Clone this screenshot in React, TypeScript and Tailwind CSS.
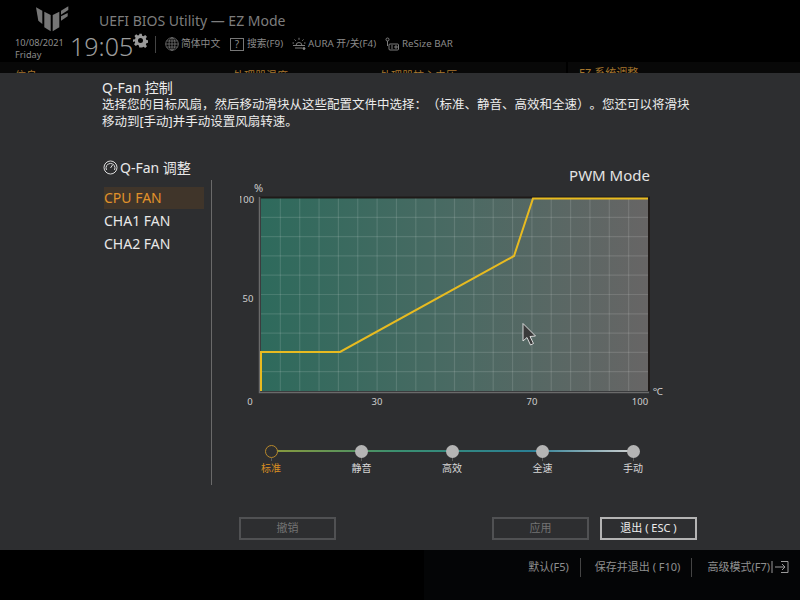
const FONT = "font-['Noto_Sans','Noto_Sans_CJK_SC',sans-serif] [text-spacing-trim:space-all]";

const xLines = Array.from({ length: 19 }, (_, i) => 261 + (i + 1) * 19.35);
const yLines = Array.from({ length: 9 }, (_, i) => 198 + (i + 1) * 19.3);

const fans = ["CPU FAN", "CHA1 FAN", "CHA2 FAN"];
const profiles = ["标准", "静音", "高效", "全速", "手动"];

const Logo = () => (
  <svg width="34" height="28" viewBox="0 0 34 28" fill="#767676">
    <path d="M1 2.300 L7.300 5.700 L7.300 19 L3.300 15.700 Z" />
    <path d="M9.300 6.700 L15.700 10 L15.700 26.300 L9.300 22.300 Z" />
    <path d="M17.700 10 L24.300 6.700 L24.300 22.300 L17.700 26.300 Z" />
    <path d="M26 5.700 L33.300 1.300 L33.300 5 L26 9.700 Z" />
    <path d="M26 11.300 L32.700 8 L32.700 11.300 L26 15.700 Z" />
  </svg>
);

const Gear = () => (
  <svg width="15" height="15" viewBox="0 0 24 24" fill="#9a9a9a">
    <path
      fillRule="evenodd"
      d="M10 1h4l.6 3.2 2.2.9L19.500 3.300l2.800 2.800-1.800 2.700.9 2.200 3.200.6v4l-3.200.6-.9 2.200 1.800 2.700-2.800 2.800-2.700-1.800-2.200.9L14 23h-4l-.6-3.200-2.200-.9-2.700 1.800-2.800-2.800 1.800-2.700-.9-2.200L0 14.400v-4l3.200-.6.9-2.200-1.800-2.700 2.800-2.800 2.700 1.800 2.200-.9zM12 8a4 4 0 1 0 0 8 4 4 0 0 0 0-8z"
    />
  </svg>
);

const Globe = () => (
  <svg width="14" height="14" viewBox="0 0 14 14" fill="none" stroke="#777" strokeWidth="0.8">
    <circle cx="7" cy="7" r="6.300" />
    <ellipse cx="7" cy="7" rx="3" ry="6.300" />
    <path d="M7 .7v12.600M.7 7h12.600M1.500 4h11M1.500 10h11" />
  </svg>
);

const Aura = () => (
  <svg width="14" height="14" viewBox="0 0 14 14" fill="none" stroke="#8a8a8a" strokeWidth="0.9">
    <path d="M4 8.500a3 3 0 1 1 6 0M1 8.500h12M7 .8v2M2.500 2.500l1.300 1.300M11.500 2.500l-1.300 1.300M.5 6h1.500M12 6h1.500M3 11h7.500" />
    <circle cx="12" cy="11.500" r="1" fill="#8a8a8a" />
  </svg>
);

const ResizeIcon = () => (
  <svg width="14" height="14" viewBox="0 0 14 14" fill="none" stroke="#8a8a8a" strokeWidth="0.9">
    <circle cx="2.500" cy="2.500" r="1.500" />
    <path d="M2.500 4v5" />
    <rect x="4" y="7" width="9.500" height="6" rx="1" />
    <path d="M6 9h2M6 11h2M10 9h2v2h-2z" />
  </svg>
);

const Stat = ({ label, className }: { label: string; className: string }) => (
  <div className={`text-[11px] leading-none text-[#a5752d] ${className}`}>{label}</div>
);

const Chart = () => (
  <svg width="430" height="250" viewBox="240 160 430 250" className="block">
    <defs>
      <linearGradient id="heat" x1="0" x2="1" y1="0" y2="0">
        <stop offset="0" stopColor="#2e6a5c" />
        <stop offset="0.5" stopColor="#4a6a63" />
        <stop offset="1" stopColor="#676565" />
      </linearGradient>
    </defs>
    <text x="650" y="181" textAnchor="end" fontSize="15" fill="#e4e4e4">PWM Mode</text>
    <text x="254" y="192" fontSize="11" fill="#c8c8c8">%</text>
    <rect x="261" y="198" width="387" height="193" fill="url(#heat)" />
    {xLines.map((x) => (
      <line key={x} x1={x} x2={x} y1="198" y2="391" stroke="#ffffff" strokeOpacity="0.12" strokeWidth="1.200" />
    ))}
    {yLines.map((y) => (
      <line key={y} x1="261" x2="648" y1={y} y2={y} stroke="#ffffff" strokeOpacity="0.12" strokeWidth="1.200" />
    ))}
    <path d="M260 197.500H649V391" fill="none" stroke="#1f1a18" strokeWidth="2" />
    <path d="M259.500 197V392.500H649" fill="none" stroke="#6a6a6a" strokeWidth="1.500" />
    <path d="M261 391V352H340L514 256L533 198.500H648" fill="none" stroke="#e8bb20" strokeWidth="2" />
    <g fontSize="9.500" fill="#cfcfcf" textAnchor="middle">
      <text x="246" y="203">100</text>
      <text x="248" y="302">50</text>
      <text x="250" y="405">0</text>
      <text x="377" y="405">30</text>
      <text x="532" y="405">70</text>
      <text x="640" y="405">100</text>
    </g>
    <text x="653" y="395" fontSize="10" fill="#cfcfcf">℃</text>
    <path
      d="M523 323.500V341L527 337.500L530.500 345L533.500 343.500L530 336.500L535.500 336Z"
      fill="#3a3a3a"
      stroke="#e8e8e8"
      strokeWidth="0.9"
    />
  </svg>
);

const ProfileSlider = () => (
  <div className="relative mt-[35px] ml-[11px] w-[402px] flex justify-between">
    <div className="absolute left-[20px] right-[20px] top-[5px] h-[2px] bg-[linear-gradient(90deg,#8a9a3c,#3a8f70_35%,#2a7f95_72%,#d0d0d0)]" />
    {profiles.map((p, i) => (
      <div key={p} className="relative w-[40px] flex flex-col items-center">
        {i === 0 ? (
          <div className="w-[13px] h-[13px] -mt-[0.5px] rounded-full border-[1.5px] border-[#b8892c] bg-[#2d2e30]" />
        ) : (
          <div className="w-[13px] h-[13px] -mt-[0.5px] rounded-full bg-[#b4b4b4]" />
        )}
        <div className="w-px h-[3px] bg-[#5a5a5a]" />
        <span className={`text-[10px] leading-[14px] ${i === 0 ? "text-[#d88d22]" : "text-[#d8d8d8]"}`}>{p}</span>
      </div>
    ))}
  </div>
);

export default function App() {
  return (
    <div className={`w-[800px] h-[600px] flex flex-col overflow-hidden bg-black ${FONT}`}>
      {/* top bar */}
      <header className="h-[62px] flex flex-col">
        <div className="h-[32px] flex items-center">
          <div className="ml-[35px] mt-[6px]"><Logo /></div>
          <h1 className="ml-[30px] mt-[10px] text-[14px] leading-none text-[#7d7d7d]">UEFI BIOS Utility — EZ Mode</h1>
        </div>
        <div className="h-[30px] flex items-start text-[#8a8a8a] text-[9.800px]">
          <div className="ml-[15px] w-[55px] pt-[5px] text-[9.200px] leading-[12px] text-[#8c8c8c]">
            <div>10/08/2021</div>
            <div>Friday</div>
          </div>
          <div className="pt-[1.5px] text-[25px] leading-none font-light text-[#9c9c9c] w-[63px]">19:05</div>
          <div className="mt-[1px]"><Gear /></div>
          <div className="ml-[7px] mt-[4px] w-px h-[17px] bg-[#444]" />
          <div className="ml-[9px] h-[24px] flex items-center">
            <Globe />
            <span className="ml-[2px] w-[49px]">简体中文</span>
            <div className="w-[14px] h-[13px] border border-[#777] text-[10px] leading-[11px] text-center">?</div>
            <span className="ml-[3px] w-[45px]">搜索(F9)</span>
            <Aura />
            <span className="ml-[2px] w-[77px]">AURA 开/关(F4)</span>
            <ResizeIcon />
            <span className="ml-[3px]">ReSize BAR</span>
          </div>
        </div>
      </header>

      {/* tiles behind the dialog */}
      <div className="h-[11px] flex overflow-hidden bg-[#080808]">
        <Stat label="信息" className="pt-[8px] ml-[15px] w-[218px]" />
        <Stat label="处理器温度" className="pt-[8px] w-[147px]" />
        <Stat label="处理器核心电压" className="pt-[8px] w-[186px]" />
        <div className="w-[2px] bg-black" />
        <Stat label="EZ 系统调整" className="pt-[5px] ml-[11px]" />
      </div>

      {/* dialog */}
      <main className="h-[477px] bg-[#2d2e30] flex flex-col text-[#ececec]">
        <div className="pl-[102px] pt-[6px] text-[12.500px] leading-[17px]">
          <h2 className="text-[14px]">Q-Fan 控制</h2>
          <p>选择您的目标风扇，然后移动滑块从这些配置文件中选择：（标准、静音、高效和全速）。您还可以将滑块</p>
          <p>移动到[手动]并手动设置风扇转速。</p>
        </div>

        <div className="mt-[28px] flex">
          <aside className="w-[212px] shrink-0 pl-[102px]">
            <div className="h-[18px] flex items-center text-[14px] text-[#e8e8e8]">
              <svg width="15" height="15" viewBox="0 0 15 15" fill="none" stroke="#dcdcdc" strokeWidth="1" className="ml-[1px] mr-[2px]">
                <circle cx="7.500" cy="7.500" r="6.500" />
                <path d="M3.500 10a4.500 4.500 0 1 1 8 0M7.500 8l2-3" />
              </svg>
              Q-Fan 调整
            </div>
            <div className="mt-[4px] h-[305px] border-r border-[#6a6a6a] pt-[7px] pl-[2px] pr-[7px] text-[14px] leading-[22.500px]">
              {fans.map((f, i) => (
                <div key={f} className={i === 0 ? "bg-[#40352a] text-[#e0922a] h-[22px]" : "h-[22.500px] text-[#e8e8e8] mt-[0.500px]"}>
                  {f}
                </div>
              ))}
            </div>
          </aside>

          <section className="flex-1 pt-[2px] pl-[28px]">
            <Chart />
            <ProfileSlider />
          </section>
        </div>

        <div className="mt-auto mb-[10px] flex pl-[239px] text-[11px]">
          <button className="w-[97px] h-[23px] border-2 border-[#505153] text-[#737373]">撤销</button>
          <button className="ml-[156px] w-[97px] h-[23px] border-2 border-[#505153] text-[#737373]">应用</button>
          <button className="ml-[11px] w-[97px] h-[23px] border-2 border-[#b4b4b4] text-[#eeeeee]">退出 ( ESC )</button>
        </div>
      </main>

      {/* bottom bar */}
      <footer className="flex-1 bg-[linear-gradient(90deg,#000_424px,#040506_424px)] flex items-start justify-end pt-[8px] pr-[11px] text-[11px] leading-[17px] text-[#8f8f8f]">
        <span>默认(F5)</span>
        <div className="ml-[11px] mr-[14px] w-px h-[19px] bg-[#444]" />
        <span>保存并退出 ( F10)</span>
        <div className="ml-[11px] mr-[15px] w-px h-[19px] bg-[#444]" />
        <span>高级模式(F7)</span>
        <svg width="18" height="14" viewBox="0 0 18 14" fill="none" stroke="#9a9a9a" strokeWidth="1" className="mt-[2px] ml-[1px]">
          <path d="M1 1v12M4 7h10M11 4l3 3-3 3M10 1.500h7v11h-7" />
        </svg>
      </footer>
    </div>
  );
}
